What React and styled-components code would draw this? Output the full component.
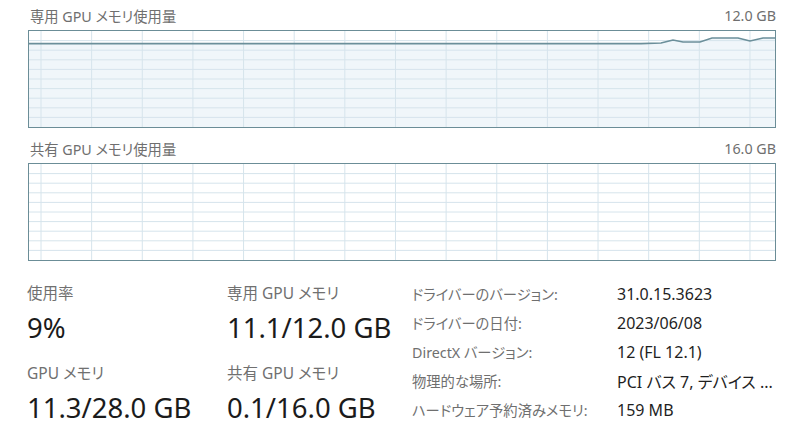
import React from "react";
import styled, { createGlobalStyle } from "styled-components";

const GlobalStyle = createGlobalStyle`
  html, body {
    margin: 0;
    padding: 0;
    background: #ffffff;
  }
  body {
    font-family: "Noto Sans", "Noto Sans CJK JP", sans-serif;
  }
`;

const Page = styled.div`
  width: 800px;
  height: 434px;
  box-sizing: border-box;
  padding: 5px 24px 0 28px;
  overflow: hidden;
  background: #fff;
`;

const GraphHead = styled.div`
  display: flex;
  justify-content: space-between;
  align-items: center;
  height: 20px;
  margin-bottom: 5px;
  padding-left: 2px;
  font-size: 14.3px;
  color: #6f6f6f;
  font-feature-settings: "palt";
`;

const GraphBox = styled.div`
  height: 96px;
  border: 1px solid #6b8d97;
  margin-bottom: 10px;
  background: #ffffff;
  svg {
    display: block;
    width: 100%;
    height: 100%;
  }
`;

const Stats = styled.div`
  display: flex;
  margin-top: 22px;
  margin-left: -1px;
`;

const StatCol = styled.div`
  width: ${(p) => p.$w}px;
  display: flex;
  flex-direction: column;
`;

const StatLabel = styled.div`
  font-size: 15.5px;
  line-height: 20px;
  color: #707070;
  font-feature-settings: "palt";
`;

const StatValue = styled.div`
  font-size: 27.5px;
  line-height: 34px;
  color: #1b1b1b;
  margin-top: 8px;
  margin-bottom: 18px;
`;

const InfoTable = styled.div`
  display: grid;
  grid-template-columns: 205px auto;
  grid-auto-rows: 29px;
  align-items: center;
  margin-top: -4px;
  margin-left: -13px;
`;

const InfoKey = styled.div`
  font-size: 14.3px;
  color: #6f6f6f;
  font-feature-settings: "palt";
  white-space: nowrap;
`;

const InfoVal = styled.div`
  font-size: 16px;
  color: #1f1f1f;
  font-feature-settings: "palt";
  white-space: nowrap;
`;

const W = 746;
const H = 96;

const Grid = () => {
  const vx = [];
  for (let i = 0; i < 15; i++) vx.push(12 + i * 50.64);
  const hy = [];
  for (let k = 1; k < 10; k++) hy.push(k * 9.6);
  return (
    <g>
      {vx.map((x) => (
        <line key={"v" + x} x1={x} y1={0} x2={x} y2={H} stroke="#d6e4ec" strokeWidth="1" />
      ))}
      {hy.map((y) => (
        <line key={"h" + y} x1={0} y1={y} x2={W} y2={y} stroke="#d6e4ec" strokeWidth="1" />
      ))}
    </g>
  );
};

const usage = [
  [0, 12.6],
  [612, 12.6],
  [632, 12],
  [644, 9],
  [654, 11],
  [671, 11],
  [683, 7],
  [709, 7],
  [721, 10],
  [734, 7],
  [746, 7],
];

const DedicatedGraph = () => {
  const line = usage.map(([x, y]) => `${x},${y}`).join(" ");
  const area = `0,${H} ${line} ${W},${H}`;
  return (
    <svg viewBox={`0 0 ${W} ${H}`} preserveAspectRatio="none">
      <polygon points={area} fill="#f0f6fa" />
      <Grid />
      <polyline points={line} fill="none" stroke="#6b8f9a" strokeWidth="1.6" />
    </svg>
  );
};

const SharedGraph = () => (
  <svg viewBox={`0 0 ${W} ${H}`} preserveAspectRatio="none">
    <Grid />
  </svg>
);

const info = [
  ["ドライバーのバージョン:", "31.0.15.3623"],
  ["ドライバーの日付:", "2023/06/08"],
  ["DirectX バージョン:", "12 (FL 12.1)"],
  ["物理的な場所:", "PCI バス 7, デバイス ..."],
  ["ハードウェア予約済みメモリ:", "159 MB"],
];

export default function App() {
  return (
    <>
      <GlobalStyle />
      <Page>
        <GraphHead>
          <span>専用 GPU メモリ使用量</span>
          <span>12.0 GB</span>
        </GraphHead>
        <GraphBox>
          <DedicatedGraph />
        </GraphBox>

        <GraphHead>
          <span>共有 GPU メモリ使用量</span>
          <span>16.0 GB</span>
        </GraphHead>
        <GraphBox>
          <SharedGraph />
        </GraphBox>

        <Stats>
          <StatCol $w={200}>
            <StatLabel>使用率</StatLabel>
            <StatValue>9%</StatValue>
            <StatLabel>GPU メモリ</StatLabel>
            <StatValue>11.3/28.0 GB</StatValue>
          </StatCol>
          <StatCol $w={198}>
            <StatLabel>専用 GPU メモリ</StatLabel>
            <StatValue>11.1/12.0 GB</StatValue>
            <StatLabel>共有 GPU メモリ</StatLabel>
            <StatValue>0.1/16.0 GB</StatValue>
          </StatCol>
          <InfoTable>
            {info.map(([k, v]) => (
              <React.Fragment key={k}>
                <InfoKey>{k}</InfoKey>
                <InfoVal>{v}</InfoVal>
              </React.Fragment>
            ))}
          </InfoTable>
        </Stats>
      </Page>
    </>
  );
}
